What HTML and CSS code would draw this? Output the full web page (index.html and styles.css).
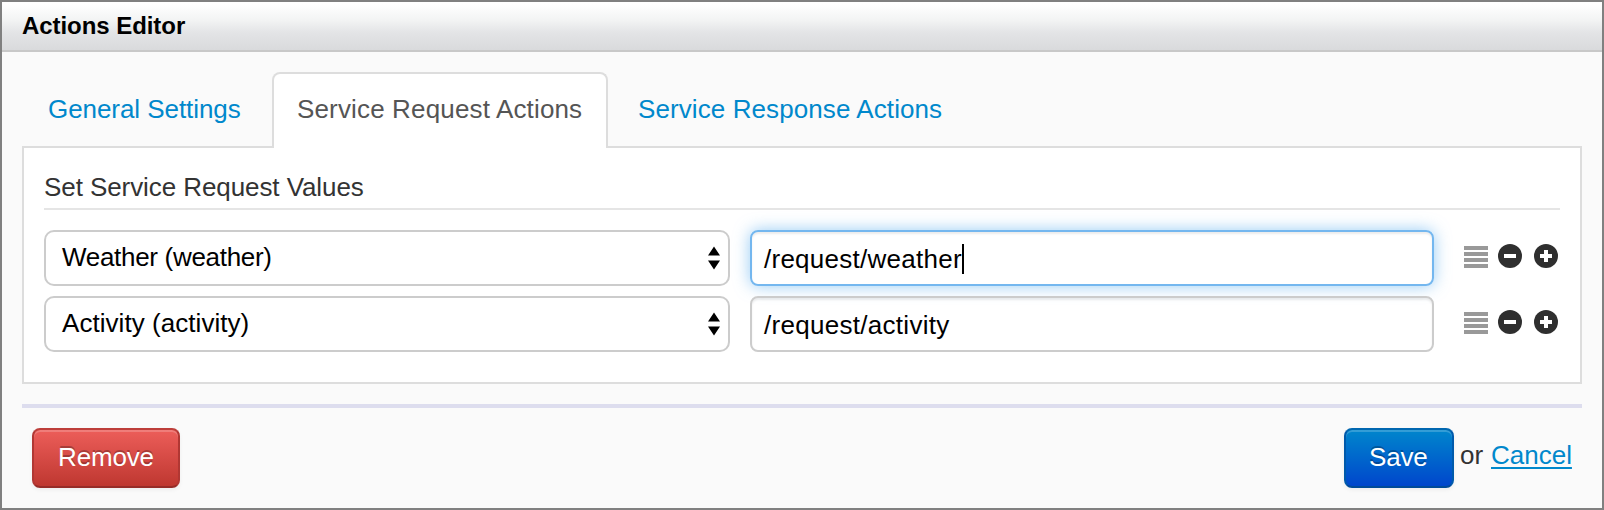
FILE: index.html
```html
<!DOCTYPE html>
<html lang="en">
<head>
<meta charset="utf-8">
<title>Actions Editor</title>
<link rel="stylesheet" href="styles.css">
</head>
<body>
<svg class="defs" width="0" height="0" aria-hidden="true">
  <symbol id="handle" viewBox="0 0 24 24"><path fill="#999" d="M0 2h24v4H0zM0 8h24v4H0zM0 14h24v4H0zM0 20h24v4H0z"/></symbol>
  <symbol id="minus" viewBox="0 0 24 24"><circle cx="12" cy="12" r="12" fill="#2f2f2f"/><path fill="#fff" d="M6 10h12v4H6z"/></symbol>
  <symbol id="plus" viewBox="0 0 24 24"><circle cx="12" cy="12" r="12" fill="#2f2f2f"/><path fill="#fff" d="M6 10h4V6h4v4h4v4h-4v4h-4v-4H6z"/></symbol>
  <symbol id="arrows" viewBox="0 0 12 24"><path d="M6 .5l6 9H0zM0 14.500h12l-6 9z"/></symbol>
</svg>
<div class="dialog">
  <header class="titlebar"><span class="title">Actions Editor</span></header>
  <main class="content">
    <nav class="tabs">
      <a class="tab tab-general"><span>General Settings</span></a>
      <a class="tab tab-request active"><span>Service Request Actions</span></a>
      <a class="tab tab-response"><span>Service Response Actions</span></a>
    </nav>
    <section class="panel">
      <h2 class="legend"><span>Set Service Request Values</span></h2>
      <div class="row">
        <div class="select"><span class="weather">Weather (weather)</span><svg class="arrows"><use href="#arrows"/></svg></div>
        <div class="input focused"><span class="path-weather">/request/weather</span><i class="caret"></i></div>
        <div class="tools"><svg><use href="#handle"/></svg><svg><use href="#minus"/></svg><svg><use href="#plus"/></svg></div>
      </div>
      <div class="row">
        <div class="select"><span class="activity">Activity (activity)</span><svg class="arrows"><use href="#arrows"/></svg></div>
        <div class="input"><span class="path-activity">/request/activity</span></div>
        <div class="tools"><svg><use href="#handle"/></svg><svg><use href="#minus"/></svg><svg><use href="#plus"/></svg></div>
      </div>
    </section>
    <footer class="footer">
      <a class="btn btn-danger"><span>Remove</span></a>
      <div class="confirm">
        <a class="btn btn-primary"><span>Save</span></a>
        <span class="or">or</span>
        <a class="cancel">Cancel</a>
      </div>
    </footer>
  </main>
</div>
</body>
</html>
```
FILE: styles.css
```css
* { box-sizing: border-box; }
body {
  margin: 0;
  font: 26px/40px "Liberation Sans", Arial, sans-serif;
  color: #333;
}
.defs { display: none; }
.dialog {
  width: 1604px;
  height: 510px;
  border: 2px solid #808080;
  background: #fafafa;
}
.titlebar {
  height: 50px;
  padding: 4px 20px;
  border-bottom: 2px solid #c8c8c8;
  background: linear-gradient(#fff 5%, #f3f4f4 37%, #e3e4e6 64%, #d9dadc);
  color: #000;
  font-size: 24px;
  font-weight: bold;
  letter-spacing: -.06px;
}
.content { padding: 20px 20px 0; }
.tabs { display: flex; height: 76px; margin-bottom: -2px; position: relative; }
.tab {
  height: 76px;
  padding: 15px 24px;
  border: 2px solid transparent;
  border-bottom: 0;
  color: #08c;
  white-space: nowrap;
}
.tab-general { width: 246px; margin-right: 4px; letter-spacing: -.06px; }
.tab-request { width: 336px; margin-right: 4px; padding-left: 23px; letter-spacing: .15px; }
.tab-response { letter-spacing: .09px; }
.active {
  border-color: #ddd;
  border-radius: 8px 8px 0 0;
  background: #fff;
  color: #555;
}
.panel {
  height: 238px;
  padding: 19px 20px 20px;
  border: 2px solid #ddd;
  background: #fff;
}
.legend {
  height: 43px;
  margin: 0 0 20px;
  border-bottom: 2px solid #e5e5e5;
  font: inherit;
  letter-spacing: -.08px;
}
.row { display: flex; height: 56px; margin-bottom: 10px; color: #000; white-space: nowrap; }
.select {
  display: flex;
  justify-content: space-between;
  width: 686px;
  margin-right: 20px;
  padding: 5px 8px 0 16px;
  border: 2px solid #ccc;
  border-radius: 10px;
}
.weather { letter-spacing: -.3px; }
.activity { letter-spacing: .05px; }
.path-weather { letter-spacing: .26px; }
.path-activity { letter-spacing: .29px; }
.arrows { width: 12px; height: 24px; margin-top: 9px; }
.input {
  display: flex;
  width: 684px;
  padding: 7px 12px 0;
  border: 2px solid #ccc;
  border-radius: 8px;
  box-shadow: inset 0 2px 2px rgba(0,0,0,.075);
}
.focused {
  border-color: #74b7ef;
  box-shadow: inset 0 2px 2px rgba(0,0,0,.075), 0 0 16px rgba(82,168,236,.6);
}
.caret { width: 2px; height: 30px; margin-top: 5px; background: #000; }
.tools { display: flex; gap: 12px; margin: 14px 0 0 30px; }
.tools svg { width: 24px; height: 24px; }
.tools svg:first-child { margin-right: -2px; }
.footer {
  display: flex;
  justify-content: space-between;
  margin-top: 20px;
  padding: 20px 10px 0;
  border-top: 4px solid #dde;
}
.btn {
  display: block;
  height: 60px;
  padding: 7px 24px;
  border: 2px solid;
  border-radius: 8px;
  box-shadow: inset 0 2px 0 rgba(255,255,255,.2), 0 2px 4px rgba(0,0,0,.05);
  color: #fff;
  text-shadow: 0 -2px 0 rgba(0,0,0,.25);
}
.btn-danger { width: 148px; border-color: #bd3e3a #b13733 #972c28; background: linear-gradient(#ee5f5b, #bd362f); letter-spacing: -.15px; }
.btn-primary { width: 110px; padding-left: 23px; border-color: #0067b0 #005aab #004b99; background: linear-gradient(#08c, #04c); letter-spacing: -.2px; }
.btn { background-clip: border-box; background-origin: border-box; }
.confirm { display: flex; }
.or { width: 31px; margin: 7px 0 0 6px; }
.cancel {
  width: 81px;
  margin-top: 7px;
  color: #08c;
  text-decoration: underline;
  text-decoration-thickness: 2px;
  text-underline-offset: 3px;
  text-decoration-skip-ink: none;
}
```
